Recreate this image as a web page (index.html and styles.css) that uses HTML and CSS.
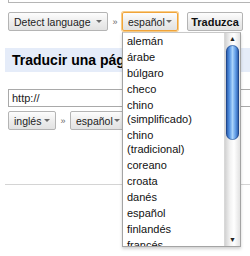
FILE: index.html
```html
<!DOCTYPE html>
<html lang="es">
<head>
  <meta charset="UTF-8">
  <meta name="viewport" content="width=device-width, initial-scale=1.0">
  <title>Traductor</title>
  <link rel="stylesheet" href="styles.css">
</head>
<body>
  <div class="page">
    <div class="source"></div>

    <div class="bar bar-top">
      <button class="pick pick-detect">Detect language<i class="caret"></i></button>
      <span class="sep">»</span>
      <button class="pick pick-lang focus">español<i class="caret"></i></button>
      <button class="go">Traduzca</button>
    </div>

    <h2 class="title">Traducir una página</h2>

    <input class="url" type="text" value="http://">

    <div class="bar bar-url">
      <button class="pick pick-from">inglés<i class="caret"></i></button>
      <span class="sep">»</span>
      <button class="pick pick-lang">español<i class="caret"></i></button>
    </div>

    <hr class="rule">

    <!-- lista abierta del segundo select -->
    <div class="menu">
      <ul class="options">
        <li>alemán</li>
        <li>árabe</li>
        <li>búlgaro</li>
        <li>checo</li>
        <li>chino<br>(simplificado)</li>
        <li>chino<br>(tradicional)</li>
        <li>coreano</li>
        <li>croata</li>
        <li>danés</li>
        <li>español</li>
        <li>finlandés</li>
        <li>francés</li>
      </ul>
      <div class="scroll">
        <div class="scroll-btn">&#9650;</div>
        <div class="track">
          <div class="thumb"></div>
        </div>
        <div class="scroll-btn">&#9660;</div>
      </div>
    </div>
  </div>
</body>
</html>
```

FILE: styles.css
```css
html, body{
  margin: 0;
  padding: 0;
  background: #fff;
  overflow: hidden;
}

.page{
  position: relative;
  width: 250px;
  height: 256px;
  padding-left: 5px;
  box-sizing: border-box;
  overflow: hidden;
  font-family: "Liberation Sans", Arial, sans-serif;
  font-size: 11px;
  color: #222;
}

.source{
  height: 2px;
  margin: 0 -10px 0 3px;
  border: 1px solid #b5b5b5;
  border-top: none;
}

.bar{
  display: flex;
  align-items: center;
  margin-left: 3px;
}
.bar-top{
  margin-top: 9px;
}
.bar-url{
  margin-top: 4px;
}

.pick, .go{
  display: flex;
  align-items: center;
  flex: none;
  height: 19px;
  margin: 0;
  padding: 0 5px 0 5px;
  border: 1px solid #b4b4b4;
  border-radius: 2px;
  background: linear-gradient(#fdfdfd, #ececec 55%, #e2e2e2);
  font-family: inherit;
  font-size: 10.5px;
  color: #222;
  white-space: nowrap;
  box-sizing: border-box;
}
.pick{
  justify-content: space-between;
}
.pick-detect{
  width: 100px;
}
.pick-lang{
  width: 56px;
}
.pick-from{
  width: 48px;
}
.pick.focus{
  border-color: #f0a43a;
  box-shadow: 0 0 0 1px #f8cc87;
}
.go{
  justify-content: center;
  width: 56px;
  margin-left: 9px;
  padding: 0;
  font-size: 11px;
  font-weight: bold;
  color: #111;
}

.caret{
  display: inline-block;
  flex: none;
  border-left: 3px solid transparent;
  border-right: 3px solid transparent;
  border-top: 3px solid #6a6a6a;
}

.sep{
  flex: none;
  width: 14px;
  text-align: center;
  font-size: 9px;
  color: #666;
}

.title{
  margin: 17px 0 0;
  height: 24px;
  padding-left: 7px;
  background: #e5ecf9;
  font-size: 14px;
  line-height: 25px;
  font-weight: bold;
  color: #000;
  white-space: nowrap;
  overflow: hidden;
}

.url{
  display: block;
  width: 260px;
  height: 18px;
  margin: 17px 0 0 3px;
  padding: 0 3px;
  border: 1px solid #a9a9a9;
  box-sizing: border-box;
  font-family: inherit;
  font-size: 11px;
  color: #222;
}

.rule{
  margin: 54px 0 0;
  border: none;
  border-top: 1px solid #d4d4d4;
}

/* desplegable */
.menu{
  position: absolute;
  left: 122px;
  top: 32px;
  width: 119px;
  height: 215px;
  display: flex;
  border: 1px solid #a4a4a4;
  border-top-color: #c8c8c8;
  background: #fff;
  box-shadow: 0 2px 3px rgba(0,0,0,0.18);
  box-sizing: border-box;
  overflow: hidden;
}

.options{
  flex: 1;
  margin: 0;
  padding: 0;
  list-style: none;
}
.options > li{
  padding: 1px 4px;
  line-height: 14px;
  color: #111;
  white-space: nowrap;
}

.scroll{
  display: flex;
  flex-direction: column;
  width: 15px;
  background: linear-gradient(to right, #d2d2d2, #f3f3f3 35%, #fff 60%, #e2e2e2);
  border-left: 1px solid #d8d8d8;
}
.scroll-btn{
  height: 12px;
  font-size: 7px;
  line-height: 12px;
  text-align: center;
  color: #222;
}
.track{
  flex: 1;
}
.thumb{
  height: 95px;
  margin: 0 1px;
  border-radius: 7px;
  background: linear-gradient(to right, #234f9c, #4f8ee0 25%, #a9d3fb 50%, #5c98e4 75%, #214e9a);
  box-shadow: inset 0 0 0 1px rgba(20,50,110,0.45);
}
```
